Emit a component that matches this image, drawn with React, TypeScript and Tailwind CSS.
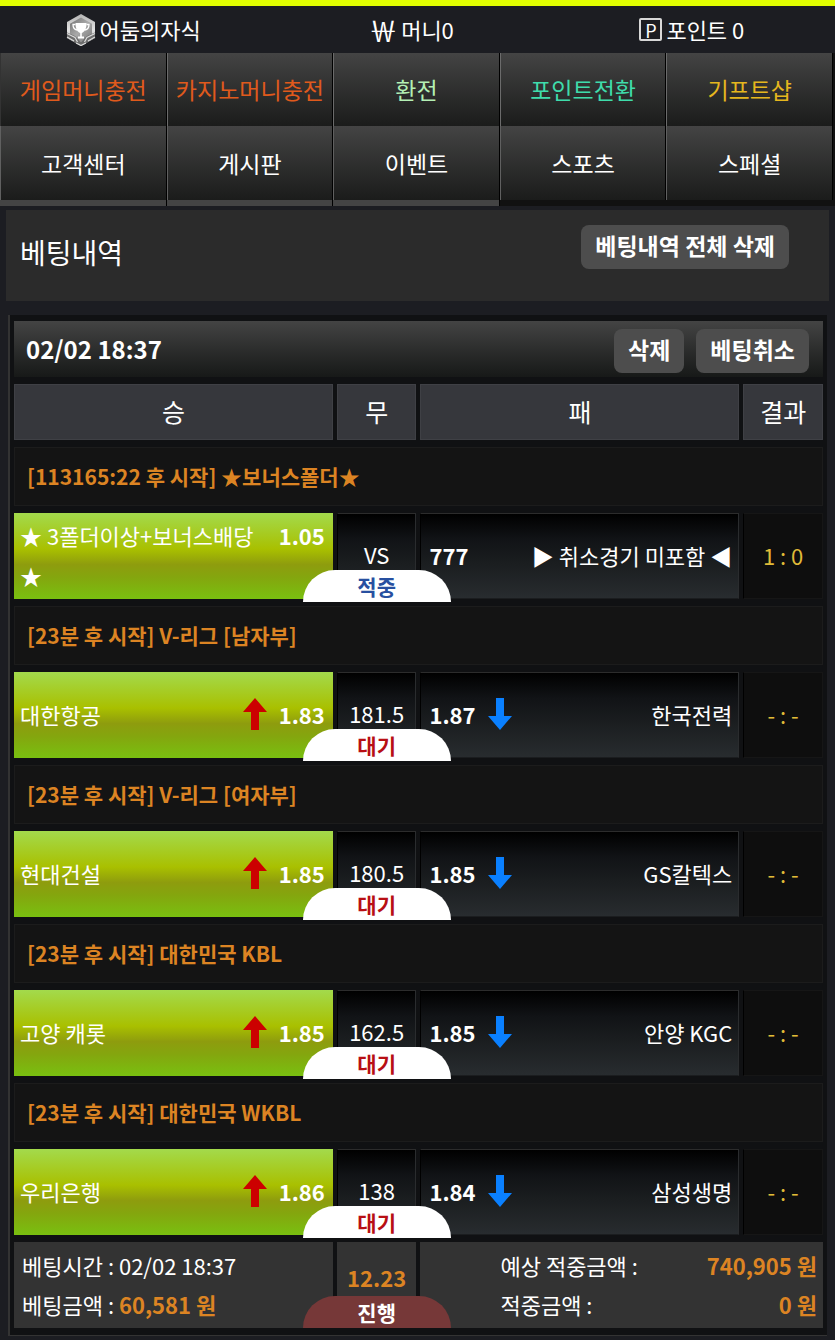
import clsx from "clsx";

interface Match {
  league: string;
  home: string;
  homeOdds: string;
  line: string;
  awayOdds: string;
  away: string;
  score: string;
  status: string;
  hit?: boolean;
  arrows?: boolean;
}

const mainLinks = [
  { label: "게임머니충전", color: "text-[#e05a1c]" },
  { label: "카지노머니충전", color: "text-[#e05a1c]" },
  { label: "환전", color: "text-[#b4f0b4]" },
  { label: "포인트전환", color: "text-[#3fdcab]" },
  { label: "기프트샵", color: "text-[#e6b71e]" },
];

const subLinks = ["고객센터", "게시판", "이벤트", "스포츠", "스페셜"];

const matches: Match[] = [
  {
    league: "[113165:22 후 시작] ★보너스폴더★",
    home: "★ 3폴더이상+보너스배당 ★",
    homeOdds: "1.05",
    line: "VS",
    awayOdds: "777",
    away: "▶ 취소경기 미포함 ◀",
    score: "1 : 0",
    status: "적중",
    hit: true,
  },
  {
    league: "[23분 후 시작] V-리그 [남자부]",
    home: "대한항공",
    homeOdds: "1.83",
    line: "181.5",
    awayOdds: "1.87",
    away: "한국전력",
    score: "- : -",
    status: "대기",
    arrows: true,
  },
  {
    league: "[23분 후 시작] V-리그 [여자부]",
    home: "현대건설",
    homeOdds: "1.85",
    line: "180.5",
    awayOdds: "1.85",
    away: "GS칼텍스",
    score: "- : -",
    status: "대기",
    arrows: true,
  },
  {
    league: "[23분 후 시작] 대한민국 KBL",
    home: "고양 캐롯",
    homeOdds: "1.85",
    line: "162.5",
    awayOdds: "1.85",
    away: "안양 KGC",
    score: "- : -",
    status: "대기",
    arrows: true,
  },
  {
    league: "[23분 후 시작] 대한민국 WKBL",
    home: "우리은행",
    homeOdds: "1.86",
    line: "138",
    awayOdds: "1.84",
    away: "삼성생명",
    score: "- : -",
    status: "대기",
    arrows: true,
  },
];

const darkCell =
  "border border-t-[#2c2c2c] border-l-black border-r-[#2a2c2e] border-b-[#1b1d1f] bg-[linear-gradient(to_bottom,#000000,#111316_30%,#1b1e20_60%,#282c2f)]";

function TrophyIcon() {
  return (
    <svg viewBox="0 0 30 32" className="w-[30px] h-8" aria-hidden="true">
      <defs>
        <linearGradient id="rim" x1="0" y1="0" x2="0" y2="1">
          <stop offset="0" stopColor="#b4b4b4" />
          <stop offset="0.5" stopColor="#e2e2e2" />
          <stop offset="1" stopColor="#a8a8a8" />
        </linearGradient>
        <linearGradient id="plate" x1="0" y1="0" x2="1" y2="1">
          <stop offset="0" stopColor="#6f6f6f" />
          <stop offset="0.5" stopColor="#a9a9a9" />
          <stop offset="1" stopColor="#7a7a7a" />
        </linearGradient>
      </defs>
      <path d="M15 0 L29 8 V24 L15 32 L1 24 V8 Z" fill="url(#rim)" />
      <path d="M15 3.5 L26 9.800 V21 L15 27.500 L4 21 V9.800 Z" fill="url(#plate)" />
      <path d="M1 18.500 L9 22 L13 26 L15 28 L17 26 L21 22 L29 18.500 V24 L15 32 L1 24 Z" fill="#6d6d6d" />
      <path d="M1 19.500 L9 23.500 L11.500 28 M29 19.500 L21 23.500 L18.500 28 M1 23 L8 27 M29 23 L22 27 M10 29 L15 31.500 L20 29" stroke="#dddddd" strokeWidth="1.200" fill="none" />
      <path d="M9.500 9 H20.500 C20.500 15 18.500 18 15.800 19 V22.500 H18 V24.500 H12 V22.500 H14.200 V19 C11.500 18 9.500 15 9.500 9 Z" fill="#fff" />
      <path d="M9.500 10.500 H7 C7 14 8.500 15.500 11 16 M20.500 10.500 H23 C23 14 21.500 15.500 19 16" stroke="#fff" strokeWidth="1.300" fill="none" />
    </svg>
  );
}

function Arrow({ down }: { down?: boolean }) {
  return (
    <svg viewBox="0 0 24 32" className="w-6 h-8 shrink-0 self-center" aria-hidden="true">
      {down ? (
        <path d="M8 0 H16 V18 H24 L12 32 L0 18 H8 Z" fill="#0a80ff" />
      ) : (
        <path d="M12 0 L24 14 H16 V32 H8 V14 H0 Z" fill="#cc0000" />
      )}
    </svg>
  );
}

function StatusBadge({ children, className }: { children: string; className: string }) {
  return (
    <span
      className={clsx(
        "absolute left-1/2 -translate-x-1/2 w-[148px] h-8 rounded-t-[32px] text-[21px] leading-8 font-bold text-center",
        className
      )}
    >
      {children}
    </span>
  );
}

function GrayButton({ children }: { children: string }) {
  return (
    <button type="button" className="h-11 px-3.5 pb-1 rounded-lg bg-[#4d4d4d] text-[23px] leading-none font-bold whitespace-nowrap cursor-pointer">
      {children}
    </button>
  );
}

function TopBar() {
  return (
    <header className="grid grid-cols-3 h-[53px] border-t-6 border-[#e1ff00] text-[22px]">
      <div className="flex items-center justify-center gap-1 pr-3">
        <TrophyIcon />
        어둠의자식
      </div>
      <div className="flex items-center justify-center gap-1 pr-3">
        <span className="text-[28px] leading-none">￦</span>
        머니0
      </div>
      <div className="flex items-center justify-center gap-1 pr-2">
        <span className="flex items-center justify-center w-[23px] h-[23px] border-2 border-[#d8d8d8] rounded-xs text-lg leading-none">P</span>
        포인트 0
      </div>
    </header>
  );
}

function NavMenu() {
  const cell =
    "flex items-center justify-center border-l border-r border-r-black bg-linear-to-b from-[#444444] to-[#1b1c1b] whitespace-nowrap";
  return (
    <nav className="grid grid-cols-5 pr-0.5 bg-[#111111] text-[23px]">
      {mainLinks.map((item, i) => (
        <a key={item.label} href="#" className={clsx(cell, "h-[73px]", item.color, i === 0 ? "border-l-[#333333]" : "border-l-[#6b6b6b]")}>
          {item.label}
        </a>
      ))}
      {subLinks.map((label) => (
        <a key={label} href="#" className={clsx(cell, "h-[74px] border-l-[#606060]")}>
          {label}
        </a>
      ))}
      {/* the lower edge only shows under the first three */}
      {subLinks.slice(0, 3).map((label) => (
        <span key={label} className="h-1.5 border-r border-black bg-[#444444]" />
      ))}
    </nav>
  );
}

function MatchRows({ match }: { match: Match }) {
  return (
    <>
      <tr>
        <td colSpan={4} className="h-[59px] px-3 border border-[#1c1c1c] bg-[#141414] text-[21px] font-bold text-[#dc8423]">
          {match.league}
        </td>
      </tr>
      <tr>
        <td className="h-[86px] pb-0.5 pl-1.5 pr-2 bg-[linear-gradient(to_bottom,#a3da4c,#a9c000_42%,#8e9c0e_60%,#84a60e_75%,#79c010)]">
          <div className="flex items-start gap-3 leading-10">
            <span className="flex-1">{match.home}</span>
            {match.arrows && <Arrow />}
            <strong>{match.homeOdds}</strong>
          </div>
        </td>
        <td className={clsx("relative pb-1 text-center", darkCell)}>
          {match.line}
          <StatusBadge className={clsx("-bottom-1 bg-white", match.hit ? "text-[#2850a0]" : "text-[#b80f14]")}>
            {match.status}
          </StatusBadge>
        </td>
        <td className={clsx("pl-2 pr-1.5 pb-0.5", darkCell)}>
          <div className="flex items-center gap-3 leading-10">
            <strong>{match.awayOdds}</strong>
            {match.arrows && <Arrow down />}
            <span className="ml-auto">{match.away}</span>
          </div>
        </td>
        <td className="pb-0.5 border border-[#161616] border-l-black bg-[#0e0e0e] text-center text-[#e0bb38]">
          {match.score}
        </td>
      </tr>
    </>
  );
}

function BetTable() {
  return (
    <table className="w-full table-fixed border-separate border-spacing-x-1 border-spacing-y-[7px] text-[22px]">
      <colgroup>
        <col className="w-[40%]" />
        <col className="w-[10%]" />
        <col className="w-[40%]" />
        <col className="w-[10%]" />
      </colgroup>
      <thead>
        <tr className="text-[25px]">
          {["승", "무", "패", "결과"].map((head) => (
            <th key={head} scope="col" className="h-14 border border-[#3f4045] bg-[#36373c] font-normal">
              {head}
            </th>
          ))}
        </tr>
      </thead>
      <tbody>
        {matches.map((match) => (
          <MatchRows key={match.league} match={match} />
        ))}
      </tbody>
      <tfoot>
        <tr className="leading-[39px]">
          <td className="h-[86px] px-2 bg-[#333333]">
            <p>베팅시간 : 02/02 18:37</p>
            <p>
              베팅금액 : <strong className="text-[#dc8423]">60,581 원</strong>
            </p>
          </td>
          <td className="relative pb-4 bg-[#333333] text-center font-bold text-[#dc8423]">
            12.23
            <StatusBadge className="bottom-0 bg-[#763838] text-white">진행</StatusBadge>
          </td>
          <td colSpan={2} className="pl-20 pr-1.5 bg-[#333333]">
            <p className="flex justify-between">
              예상 적중금액 : <strong className="text-[#dc8423]">740,905 원</strong>
            </p>
            <p className="flex justify-between">
              적중금액 : <strong className="text-[#dc8423]">0 원</strong>
            </p>
          </td>
        </tr>
      </tfoot>
    </table>
  );
}

export default function App() {
  return (
    <div className="min-h-screen bg-[#1c1d22] text-white font-['Noto_Sans_CJK_KR',sans-serif]">
      <TopBar />
      <NavMenu />
      <main>
        <section className="flex items-start justify-between h-[91px] mt-1 mx-1.5 pt-[15px] pl-3.5 pr-10 bg-[#2b2b2b]">
          <h1 className="text-[28px] leading-[54px]">베팅내역</h1>
          <GrayButton>베팅내역 전체 삭제</GrayButton>
        </section>
        <section className="mt-3.5 mx-2 pt-1.5 border-l-2 border-b border-[#333333] bg-[#101113]">
          <div className="flex items-center gap-3 h-14 mx-1 pt-1 pl-3 pr-3.5 bg-linear-to-b from-[#444444] to-[#171918]">
            <h2 className="mr-auto pb-1 text-[24px] font-bold">02/02 18:37</h2>
            <GrayButton>삭제</GrayButton>
            <GrayButton>베팅취소</GrayButton>
          </div>
          <BetTable />
        </section>
      </main>
    </div>
  );
}
